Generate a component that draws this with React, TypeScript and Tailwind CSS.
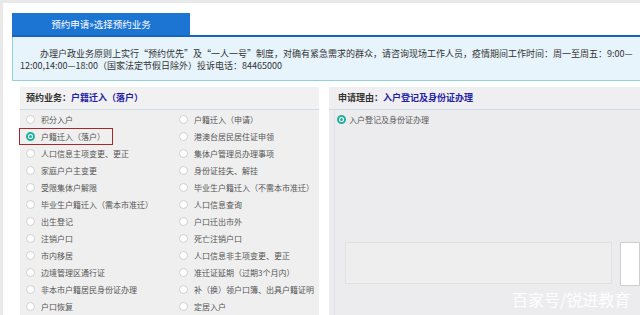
import React from 'react';

const left = [
    '积分入户',
    '户籍迁入（落户）',
    '人口信息主项变更、更正',
    '家庭户户主变更',
    '受限集体户解限',
    '毕业生户籍迁入（需本市准迁）',
    '出生登记',
    '注销户口',
    '市内移居',
    '边境管理区通行证',
    '非本市户籍居民身份证办理',
    '户口恢复',
];

const right = [
    '户籍迁入（申请）',
    '港澳台居民居住证申领',
    '集体户管理员办理事项',
    '身份证挂失、解挂',
    '毕业生户籍迁入（不需本市准迁）',
    '人口信息查询',
    '户口迁出市外',
    '死亡注销户口',
    '人口信息非主项变更、更正',
    '准迁证延期（过期3个月内）',
    '补（换）领户口簿、出具户籍证明',
    '定居入户',
];

function Radio({ checked }: { checked?: boolean }) {
    if (checked) {
        return (
            <span className="w-[9px] h-[9px] rounded-full border-[2px] border-[#22b09c] bg-white flex items-center justify-center shrink-0">
                <span className="w-[3px] h-[3px] rounded-full bg-[#22b09c]" />
            </span>
        );
    }
    return <span className="w-[9px] h-[9px] rounded-full border border-[#cfcfcf] bg-white shrink-0" />;
}

function Item({ label, checked, marked }: { label: string; checked?: boolean; marked?: boolean }) {
    return (
        <div className="relative flex items-center h-[17px] gap-[6px] whitespace-nowrap">
            <Radio checked={checked} />
            <span className="text-[8px] text-[#555]">{label}</span>
            {marked && <span className="absolute -left-[7px] top-[0px] w-[94px] h-[17px] border-[1.5px] border-[#a6282d]" />}
        </div>
    );
}

export default function App() {
    return (
        <div className="relative w-[640px] h-[315px] overflow-hidden bg-[#e9e9e9] font-['Noto_Sans_CJK_SC','Noto_Sans',sans-serif]">
            <div className="ml-[3px] mt-[3px] h-full bg-white pt-[10px]">
                <div className="pl-[9px]">
                    <div className="border-b-2 border-[#1a63bb]">
                        <div className="w-[178px] h-[22px] bg-[#1d75d3] text-white text-[9.5px] flex items-center justify-center">预约申请»选择预约业务</div>
                    </div>
                    <div className="h-[44px] bg-[#e7f4fb] border-l border-b border-[#93d2db] pl-[7px] pt-[11px] text-[9px] leading-[12px] text-[#333] whitespace-nowrap">
                        <p className="pl-[20px] h-[12px]">办理户政业务原则上实行“预约优先”及“一人一号”制度，对确有紧急需求的群众，请咨询现场工作人员，疫情期间工作时间：周一至周五：9:00—</p>
                        <p className="h-[12px]">12:00,14:00—18:00（国家法定节假日除外）投诉电话：84465000</p>
                    </div>
                </div>

                <div className="flex pl-[17px] mt-[6px] h-[240px]">
                    <div className="w-[313px] bg-[#efefef]">
                        <div className="h-[23px] flex items-center pl-[6px] border-b border-[#cadde6] text-[9px] font-bold text-[#333] bg-[#f1f1f1]">
                            预约业务：<span className="text-[#1f21a6]">户籍迁入（落户）</span>
                        </div>
                        <div className="grid grid-cols-[153px_1fr] pl-[6px] pt-[1px]">
                            {left.map((l, i) => (
                                <React.Fragment key={l}>
                                    <Item label={l} checked={i === 1} marked={i === 1} />
                                    <Item label={right[i]} />
                                </React.Fragment>
                            ))}
                        </div>
                    </div>
                    <div className="w-[11px] bg-white" />
                    <div className="flex-1 bg-[#ececee] flex flex-col">
                        <div className="h-[23px] flex items-center pl-[9px] border-b border-[#cadde6] text-[9px] font-bold text-[#333] bg-[#efeff1]">
                            申请理由：<span className="text-[#1f21a6]">入户登记及身份证办理</span>
                        </div>
                        <div className="flex-1 ml-[5px] border-l border-[#e2e2e4] pl-[2px] pt-[1px]">
                            <div className="flex items-center h-[17px] gap-[3px] whitespace-nowrap">
                                <Radio checked />
                                <span className="text-[8px] text-[#555]">入户登记及身份证办理</span>
                            </div>
                            <div className="flex mt-[114px] gap-[8px]">
                                <div className="ml-[8px] w-[267px] h-[42px] border border-[#e2e2e2] bg-[#eeeeef]" />
                                <div className="w-[20px] h-[44px] border border-[#cfcfcf] bg-white" />
                            </div>
                        </div>
                    </div>
                </div>
            </div>
            <div className="absolute left-[512px] top-[289px] text-[16px] leading-[20px] text-white/90 whitespace-nowrap">百家号/锐进教育</div>
        </div>
    );
}
